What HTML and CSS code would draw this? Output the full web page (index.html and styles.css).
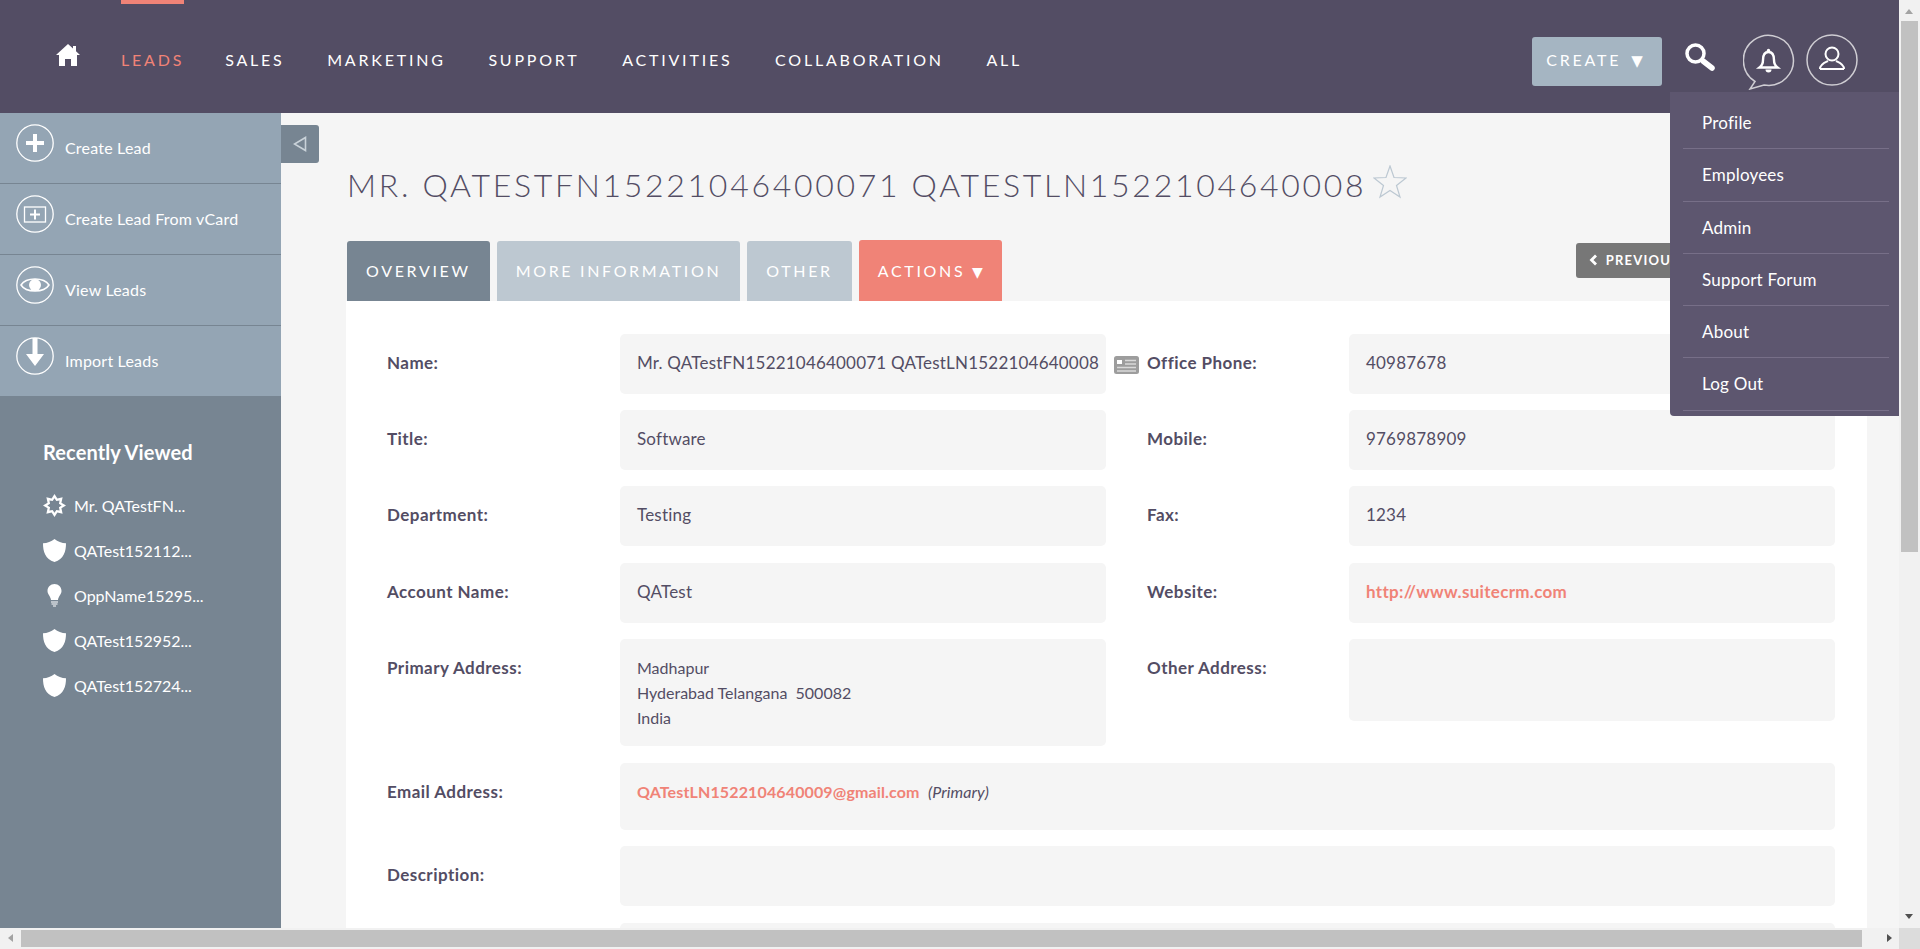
FILE: index.html
```html
<!DOCTYPE html>
<html lang="en">
<head>
    <meta charset="UTF-8">
    <meta name="viewport" content="width=device-width, initial-scale=1.0">
    <title>Lead Detail</title>
    <link rel="stylesheet" href="styles.css">
</head>
<body>
    <div class="screen">
        <div class="window">
            <header class="topbar">
                <a class="home" href="#">
                    <svg width="24" height="22" viewBox="0 0 24 22"><path fill="#fff" d="M12 0 L17 4.5 V2 H20 V7.3 L24 11 H21 V22 H15 V15 H9 V22 H3 V11 H0 Z"/></svg>
                </a>
                <nav class="mainnav">
                    <a class="active" href="#">Leads</a>
                    <a href="#">Sales</a>
                    <a href="#">Marketing</a>
                    <a href="#">Support</a>
                    <a href="#">Activities</a>
                    <a href="#">Collaboration</a>
                    <a href="#">All</a>
                </nav>
                <div class="tools">
                    <button class="create-btn">Create <span class="caret">▼</span></button>
                    <svg class="search-icon" width="30" height="28" viewBox="0 0 30 28"><circle cx="10.5" cy="10.5" r="8.5" fill="none" stroke="#fff" stroke-width="3.5"/><path d="M18 18 L27 25" stroke="#fff" stroke-width="5.5" stroke-linecap="round"/></svg>
                    <svg class="bell-icon" width="52" height="56" viewBox="0 0 52 56"><path fill="none" stroke="#cfcdd3" stroke-width="1.5" d="M12 47.5 A25 25 0 1 1 21 51 L7 55 Z"/><path fill="none" stroke="#fff" stroke-width="2.4" d="M25.5 18 C21 18 20 22 20 26 C20 30 18.5 32 16.5 33.5 H34.5 C32.5 32 31 30 31 26 C31 22 30 18 25.5 18 Z"/><circle cx="25.5" cy="16.5" r="1.7" fill="#fff"/><path d="M22.5 35.5 H28.5 A3 3 0 0 1 22.5 35.5 Z" fill="#fff"/></svg>
                    <svg class="user-icon" width="52" height="52" viewBox="0 0 52 52"><circle cx="26" cy="26" r="25" fill="none" stroke="#cfcdd3" stroke-width="1.5"/><circle cx="26" cy="20" r="6.5" fill="none" stroke="#fff" stroke-width="2"/><path fill="none" stroke="#fff" stroke-width="2" d="M14 35 C14 30 20 28 22 27 M38 35 C38 30 32 28 30 27 M14 35 H38"/></svg>
                </div>
            </header>

            <div class="body-row">
                <aside class="sidebar">
                    <ul class="actions">
                        <li><a href="#">
                            <svg width="38" height="38" viewBox="0 0 38 38"><circle cx="19" cy="19" r="18.2" fill="none" stroke="#fff" stroke-width="1.3"/><path d="M19 10 V28 M10 19 H28" stroke="#fff" stroke-width="4"/></svg>
                            <span>Create Lead</span></a></li>
                        <li><a href="#">
                            <svg width="38" height="38" viewBox="0 0 38 38"><circle cx="19" cy="19" r="18.2" fill="none" stroke="#fff" stroke-width="1.3"/><rect x="8.5" y="12" width="21" height="15" fill="none" stroke="#fff" stroke-width="1.3"/><path d="M19 14.5 V24.5 M14 19.5 H24" stroke="#fff" stroke-width="2"/></svg>
                            <span>Create Lead From vCard</span></a></li>
                        <li><a href="#">
                            <svg width="38" height="38" viewBox="0 0 38 38"><circle cx="19" cy="19" r="18.2" fill="none" stroke="#fff" stroke-width="1.3"/><path d="M5 19 C10 11 28 11 33 19 C28 27 10 27 5 19 Z" fill="none" stroke="#fff" stroke-width="1.5"/><circle cx="19" cy="19" r="6" fill="#fff"/></svg>
                            <span>View Leads</span></a></li>
                        <li><a href="#">
                            <svg width="38" height="38" viewBox="0 0 38 38"><circle cx="19" cy="19" r="18.2" fill="none" stroke="#fff" stroke-width="1.3"/><path d="M16.5 1 H21.5 V17 H28 L19 29 L10 17 H16.5 Z" fill="#fff"/></svg>
                            <span>Import Leads</span></a></li>
                    </ul>
                    <div class="recent">
                        <h3>Recently Viewed</h3>
                        <ul>
                            <li>
                                <svg width="23" height="23" viewBox="0 0 23 23"><path fill="#fff" fill-rule="evenodd" d="M11.5 0 L14.37 4.57 L19.63 3.37 L18.43 8.63 L23 11.5 L18.43 14.37 L19.63 19.63 L14.37 18.43 L11.5 23 L8.63 18.43 L3.37 19.63 L4.57 14.37 L0 11.5 L4.57 8.63 L3.37 3.37 L8.63 4.57 Z M11.5 4.3 L13.34 7.07 L16.59 6.41 L15.93 9.66 L18.7 11.5 L15.93 13.34 L16.59 16.59 L13.34 15.93 L11.5 18.7 L9.66 15.93 L6.41 16.59 L7.07 13.34 L4.3 11.5 L7.07 9.66 L6.41 6.41 L9.66 7.07 Z"/></svg>
                                <a href="#">Mr. QATestFN...</a>
                            </li>
                            <li>
                                <svg width="23" height="23" viewBox="0 0 22 22"><path fill="#fff" d="M11 0 C14 2.5 18 4 22 4 C22 12 20 19 11 22 C2 19 0 12 0 4 C4 4 8 2.5 11 0 Z"/></svg>
                                <a href="#">QATest152112...</a>
                            </li>
                            <li>
                                <svg width="23" height="23" viewBox="0 0 23 23"><path fill="#fff" d="M11.5 0 C7.5 0 4.5 3 4.5 7 C4.5 10.5 7.5 12 8 16 H15 C15.5 12 18.5 10.5 18.5 7 C18.5 3 15.5 0 11.5 0 Z"/><path d="M8 18 H15 M8.5 20 H14.5 M10 22 H13" stroke="#fff" stroke-width="1.2"/></svg>
                                <a href="#">OppName15295...</a>
                            </li>
                            <li>
                                <svg width="23" height="23" viewBox="0 0 22 22"><path fill="#fff" d="M11 0 C14 2.5 18 4 22 4 C22 12 20 19 11 22 C2 19 0 12 0 4 C4 4 8 2.5 11 0 Z"/></svg>
                                <a href="#">QATest152952...</a>
                            </li>
                            <li>
                                <svg width="23" height="23" viewBox="0 0 22 22"><path fill="#fff" d="M11 0 C14 2.5 18 4 22 4 C22 12 20 19 11 22 C2 19 0 12 0 4 C4 4 8 2.5 11 0 Z"/></svg>
                                <a href="#">QATest152724...</a>
                            </li>
                        </ul>
                    </div>
                </aside>

                <main class="content">
                    <button class="collapse-btn">
                        <svg width="14" height="16" viewBox="0 0 14 16"><path d="M12.5 1.5 V14.5 L1.5 8 Z" fill="none" stroke="#c9d2d9" stroke-width="1.6"/></svg>
                    </button>

                    <div class="title-row">
                        <h1>Mr. QATestFN15221046400071 QATestLN1522104640008</h1>
                        <svg width="34" height="34" viewBox="0 0 34 34"><polygon fill="none" stroke="#bcc8d2" stroke-width="1.2" points="17,1 21,12.5 33,13 23.5,20.5 27,32 17,25.5 7,32 10.5,20.5 1,13 13,12.5"/></svg>
                    </div>

                    <div class="tabs">
                        <a class="tab current" href="#">Overview</a>
                        <a class="tab" href="#">More Information</a>
                        <a class="tab" href="#">Other</a>
                        <a class="tab action" href="#">Actions <span>▼</span></a>
                        <button class="pager">
                            <svg width="9" height="12" viewBox="0 0 9 12"><path d="M7 1.5 L2.5 6 L7 10.5" fill="none" stroke="#fff" stroke-width="2.8"/></svg>
                            <span>Previous</span>
                        </button>
                    </div>

                    <section class="panel">
                        <div class="grid">
                            <div class="lbl">Name:</div>
                            <div class="val">Mr. QATestFN15221046400071 QATestLN1522104640008</div>
                            <div class="lbl lbl-r lbl-card">
                                <svg width="25" height="18" viewBox="0 0 25 18"><rect width="25" height="18" rx="2.5" fill="#9d9d9d"/><rect x="3" y="4" width="5" height="4" fill="#fff"/><path d="M11 4.5 H22 M11 8 H22 M3 11.5 H22 M3 15 H22" stroke="#d9d9d9" stroke-width="1.6"/></svg>
                                Office Phone:
                            </div>
                            <div class="val">40987678</div>

                            <div class="lbl">Title:</div>
                            <div class="val">Software</div>
                            <div class="lbl lbl-r">Mobile:</div>
                            <div class="val">9769878909</div>

                            <div class="lbl">Department:</div>
                            <div class="val">Testing</div>
                            <div class="lbl lbl-r">Fax:</div>
                            <div class="val">1234</div>

                            <div class="lbl">Account Name:</div>
                            <div class="val">QATest</div>
                            <div class="lbl lbl-r">Website:</div>
                            <div class="val"><a class="link" href="#">http://www.suitecrm.com</a></div>

                            <div class="lbl">Primary Address:</div>
                            <div class="val address">Madhapur<br>Hyderabad Telangana&nbsp; 500082<br>India</div>
                            <div class="lbl lbl-r">Other Address:</div>
                            <div class="val other-address"></div>

                            <div class="lbl">Email Address:</div>
                            <div class="val wide email"><a class="link" href="#">QATestLN1522104640009@gmail.com</a>&nbsp; <em>(Primary)</em></div>

                            <div class="lbl">Description:</div>
                            <div class="val wide"></div>

                            <div class="lbl"></div>
                            <div class="val wide last"></div>
                        </div>
                    </section>

                    <ul class="user-menu">
                        <li><a href="#">Profile</a></li>
                        <li><a href="#">Employees</a></li>
                        <li><a href="#">Admin</a></li>
                        <li><a href="#">Support Forum</a></li>
                        <li><a href="#">About</a></li>
                        <li><a href="#">Log Out</a></li>
                    </ul>
                </main>
            </div>
        </div>

        <div class="vscroll">
            <span class="arrow up"></span>
            <div class="vthumb"></div>
            <span class="arrow down"></span>
        </div>
    </div>

    <div class="hscroll">
        <span class="arrow left"></span>
        <div class="hthumb"></div>
        <span class="arrow right"></span>
        <div class="corner"></div>
    </div>
</body>
</html>
```

FILE: styles.css
```css
* {
    box-sizing: border-box;
}
html, body {
    height: 100%;
}
body {
    margin: 0;
    overflow: hidden;
    font-family: Lato, "Liberation Sans", sans-serif;
    font-size: 17px;
    color: #534d64;
    background-color: #f5f5f5;
}
a {
    color: inherit;
    text-decoration: none;
}
ul {
    list-style: none;
    margin: 0;
    padding: 0;
}
button {
    font-family: inherit;
    border: 0;
}

.screen {
    display: flex;
    height: 928px;
}
.window {
    flex: 1;
    min-width: 0;
    display: flex;
    flex-direction: column;
    overflow: hidden;
}

/* top bar */
.topbar {
    flex: none;
    height: 113px;
    display: flex;
    align-items: flex-start;
    padding-left: 56px;
    background-color: #534d64;
}
.home {
    margin-top: 44px;
    margin-right: 41px;
    line-height: 0;
}
.mainnav {
    display: flex;
    gap: 42.6px;
}
.mainnav a {
    display: block;
    height: 113px;
    padding-top: 47px;
    line-height: 18px;
    font-size: 16px;
    letter-spacing: 2.8px;
    text-transform: uppercase;
    color: #fff;
    border-top: 4px solid transparent;
}
.mainnav a.active {
    margin-right: -1.6px;
    color: #f08377;
    border-top-color: #f08377;
}
.tools {
    margin-left: auto;
    margin-right: 41px;
    display: flex;
    align-items: flex-start;
    padding-top: 34px;
}
.create-btn {
    width: 130px;
    height: 49px;
    margin-top: 3px;
    border-radius: 3px;
    background-color: #a5b5c2;
    color: #fff;
    font-size: 16px;
    letter-spacing: 2.8px;
    text-transform: uppercase;
    padding: 0 5px 3px 0;
}
.create-btn .caret {
    font-family: "DejaVu Sans", sans-serif;
    font-size: 15px;
    letter-spacing: 0;
    margin-left: 3px;
}
.search-icon {
    margin-left: 23px;
    margin-top: 9px;
}
.bell-icon {
    margin-left: 28px;
}
.user-icon {
    margin-left: 11px;
}

/* left column */
.body-row {
    flex: 1;
    min-height: 0;
    display: flex;
}
.sidebar {
    flex: none;
    width: 281px;
    display: flex;
    flex-direction: column;
    background-color: #778592;
    color: #fff;
}
.actions {
    background-color: #94a5b4;
}
.actions li {
    height: 71px;
    border-bottom: 1px solid #778592;
}
.actions a {
    display: flex;
    align-items: flex-start;
    gap: 11px;
    padding: 11px 0 0 16px;
    font-size: 16px;
    letter-spacing: 0.2px;
}
.actions span {
    margin-top: 14px;
    line-height: 20px;
}
.recent {
    padding: 43px 0 0 43px;
}
.recent h3 {
    margin: 0 0 19px;
    font-size: 20px;
    line-height: 24px;
    font-weight: 700;
    letter-spacing: 0.1px;
}
.recent li {
    display: flex;
    align-items: center;
    gap: 8px;
    height: 45px;
    font-size: 16px;
}

/* main column */
.content {
    flex: 1;
    min-width: 0;
    position: relative;
    padding: 0 32px 0 65px;
}
.collapse-btn {
    position: absolute;
    left: 0;
    top: 12px;
    width: 38px;
    height: 38px;
    padding: 0;
    border-radius: 0 3px 3px 0;
    background-color: #778592;
    display: flex;
    align-items: center;
    justify-content: center;
}
.title-row {
    display: flex;
    align-items: center;
    gap: 7px;
    height: 127px;
    padding: 16px 0 0 1px;
}
.title-row h1 {
    margin: 0;
    font-size: 32px;
    font-weight: 300;
    letter-spacing: 2.7px;
    text-transform: uppercase;
    white-space: nowrap;
}
.title-row svg {
    margin-top: -6px;
}
.tabs {
    display: flex;
    align-items: flex-start;
    gap: 7px;
    height: 61px;
    padding-left: 1px;
}
.tab {
    height: 60px;
    margin-top: 1px;
    padding: 20px 19px 0;
    line-height: 20px;
    font-size: 16px;
    letter-spacing: 2.66px;
    text-transform: uppercase;
    color: #fff;
    background-color: #bdc8d1;
    border-radius: 3px 3px 0 0;
}
.tab.current {
    background-color: #778592;
}
.tab.action {
    margin-top: 0;
    height: 61px;
    padding-top: 21px;
    background-color: #f08377;
}
.tab.action span {
    font-family: "DejaVu Sans", sans-serif;
    font-size: 14px;
    letter-spacing: 0;
}
.pager {
    display: flex;
    align-items: center;
    gap: 8px;
    width: 130px;
    height: 35px;
    margin: 3px 0 0 567px;
    padding: 0 0 2px 13px;
    border-radius: 3px;
    background-color: #777;
    color: #fff;
    font-size: 13px;
    font-weight: 700;
    letter-spacing: 1.2px;
    text-transform: uppercase;
}
.panel {
    height: 100%;
    padding: 33px 32px 0 41px;
    background-color: #fff;
}
.grid {
    display: grid;
    grid-template-columns: 233px 486px 243px 486px;
    row-gap: 16.2px;
    align-items: start;
}
.lbl {
    padding-top: 17px;
    line-height: 24px;
    font-weight: 700;
    letter-spacing: 0.45px;
}
.lbl-r {
    padding-left: 41px;
}
.lbl-card {
    display: flex;
    align-items: center;
    gap: 8px;
    padding-left: 8px;
    padding-top: 17px;
}
.lbl-card svg {
    flex: none;
    margin-top: 3px;
}
.val {
    height: 60px;
    padding: 17px 0 0 17px;
    line-height: 24px;
    letter-spacing: 0.2px;
    white-space: nowrap;
    border-radius: 5px;
    background-color: #f5f5f5;
}
.val.address {
    height: 107.6px;
    padding-top: 16px;
    line-height: 25px;
    font-size: 16px;
    letter-spacing: 0;
}
.val.other-address {
    height: 82px;
}
.val.wide {
    grid-column: 2 / 5;
}
.val.email {
    height: 67px;
    font-size: 16px;
    letter-spacing: 0.1px;
}
.val.last {
    margin-top: 1px;
}
.link {
    color: #f08377;
    font-weight: 700;
    letter-spacing: 0.3px;
}
.email .link {
    letter-spacing: 0.13px;
}

/* dropdown opened from the user icon */
.user-menu {
    position: absolute;
    top: -21px;
    right: 0;
    width: 229px;
    height: 324px;
    padding: 5px 10px 0 13px;
    background-color: #5d566f;
    border-radius: 0 0 0 4px;
    color: #fff;
    letter-spacing: 0.2px;
}
.user-menu li {
    height: 52.3px;
    border-bottom: 1px solid #776f88;
}
.user-menu a {
    display: block;
    padding-left: 19px;
    line-height: 52px;
}

/* scrollbars */
.vscroll {
    flex: none;
    width: 21px;
    position: relative;
    background-color: #f1f1f1;
    padding: 21px 2px 0;
}
.vthumb {
    height: 531px;
    background-color: #c1c1c1;
}
.hscroll {
    position: relative;
    height: 21px;
    background-color: #f1f1f1;
    padding: 2px 0 0 21px;
}
.hthumb {
    width: 1841px;
    height: 17px;
    background-color: #c1c1c1;
}
.corner {
    position: absolute;
    right: 0;
    top: 0;
    width: 21px;
    height: 21px;
    background-color: #dcdcdc;
}
.arrow {
    position: absolute;
    width: 0;
    height: 0;
    border-style: solid;
    border-color: transparent;
}
.arrow.up {
    top: 9px;
    left: 6px;
    border-width: 0 4.5px 5px;
    border-bottom-color: #a3a3a3;
}
.arrow.down {
    bottom: 9px;
    left: 6px;
    border-width: 5px 4.5px 0;
    border-top-color: #505050;
}
.arrow.left {
    top: 6px;
    left: 8px;
    border-width: 4.5px 5px 4.5px 0;
    border-right-color: #a3a3a3;
}
.arrow.right {
    top: 6px;
    right: 28px;
    border-width: 4.5px 0 4.5px 5px;
    border-left-color: #505050;
}
```
